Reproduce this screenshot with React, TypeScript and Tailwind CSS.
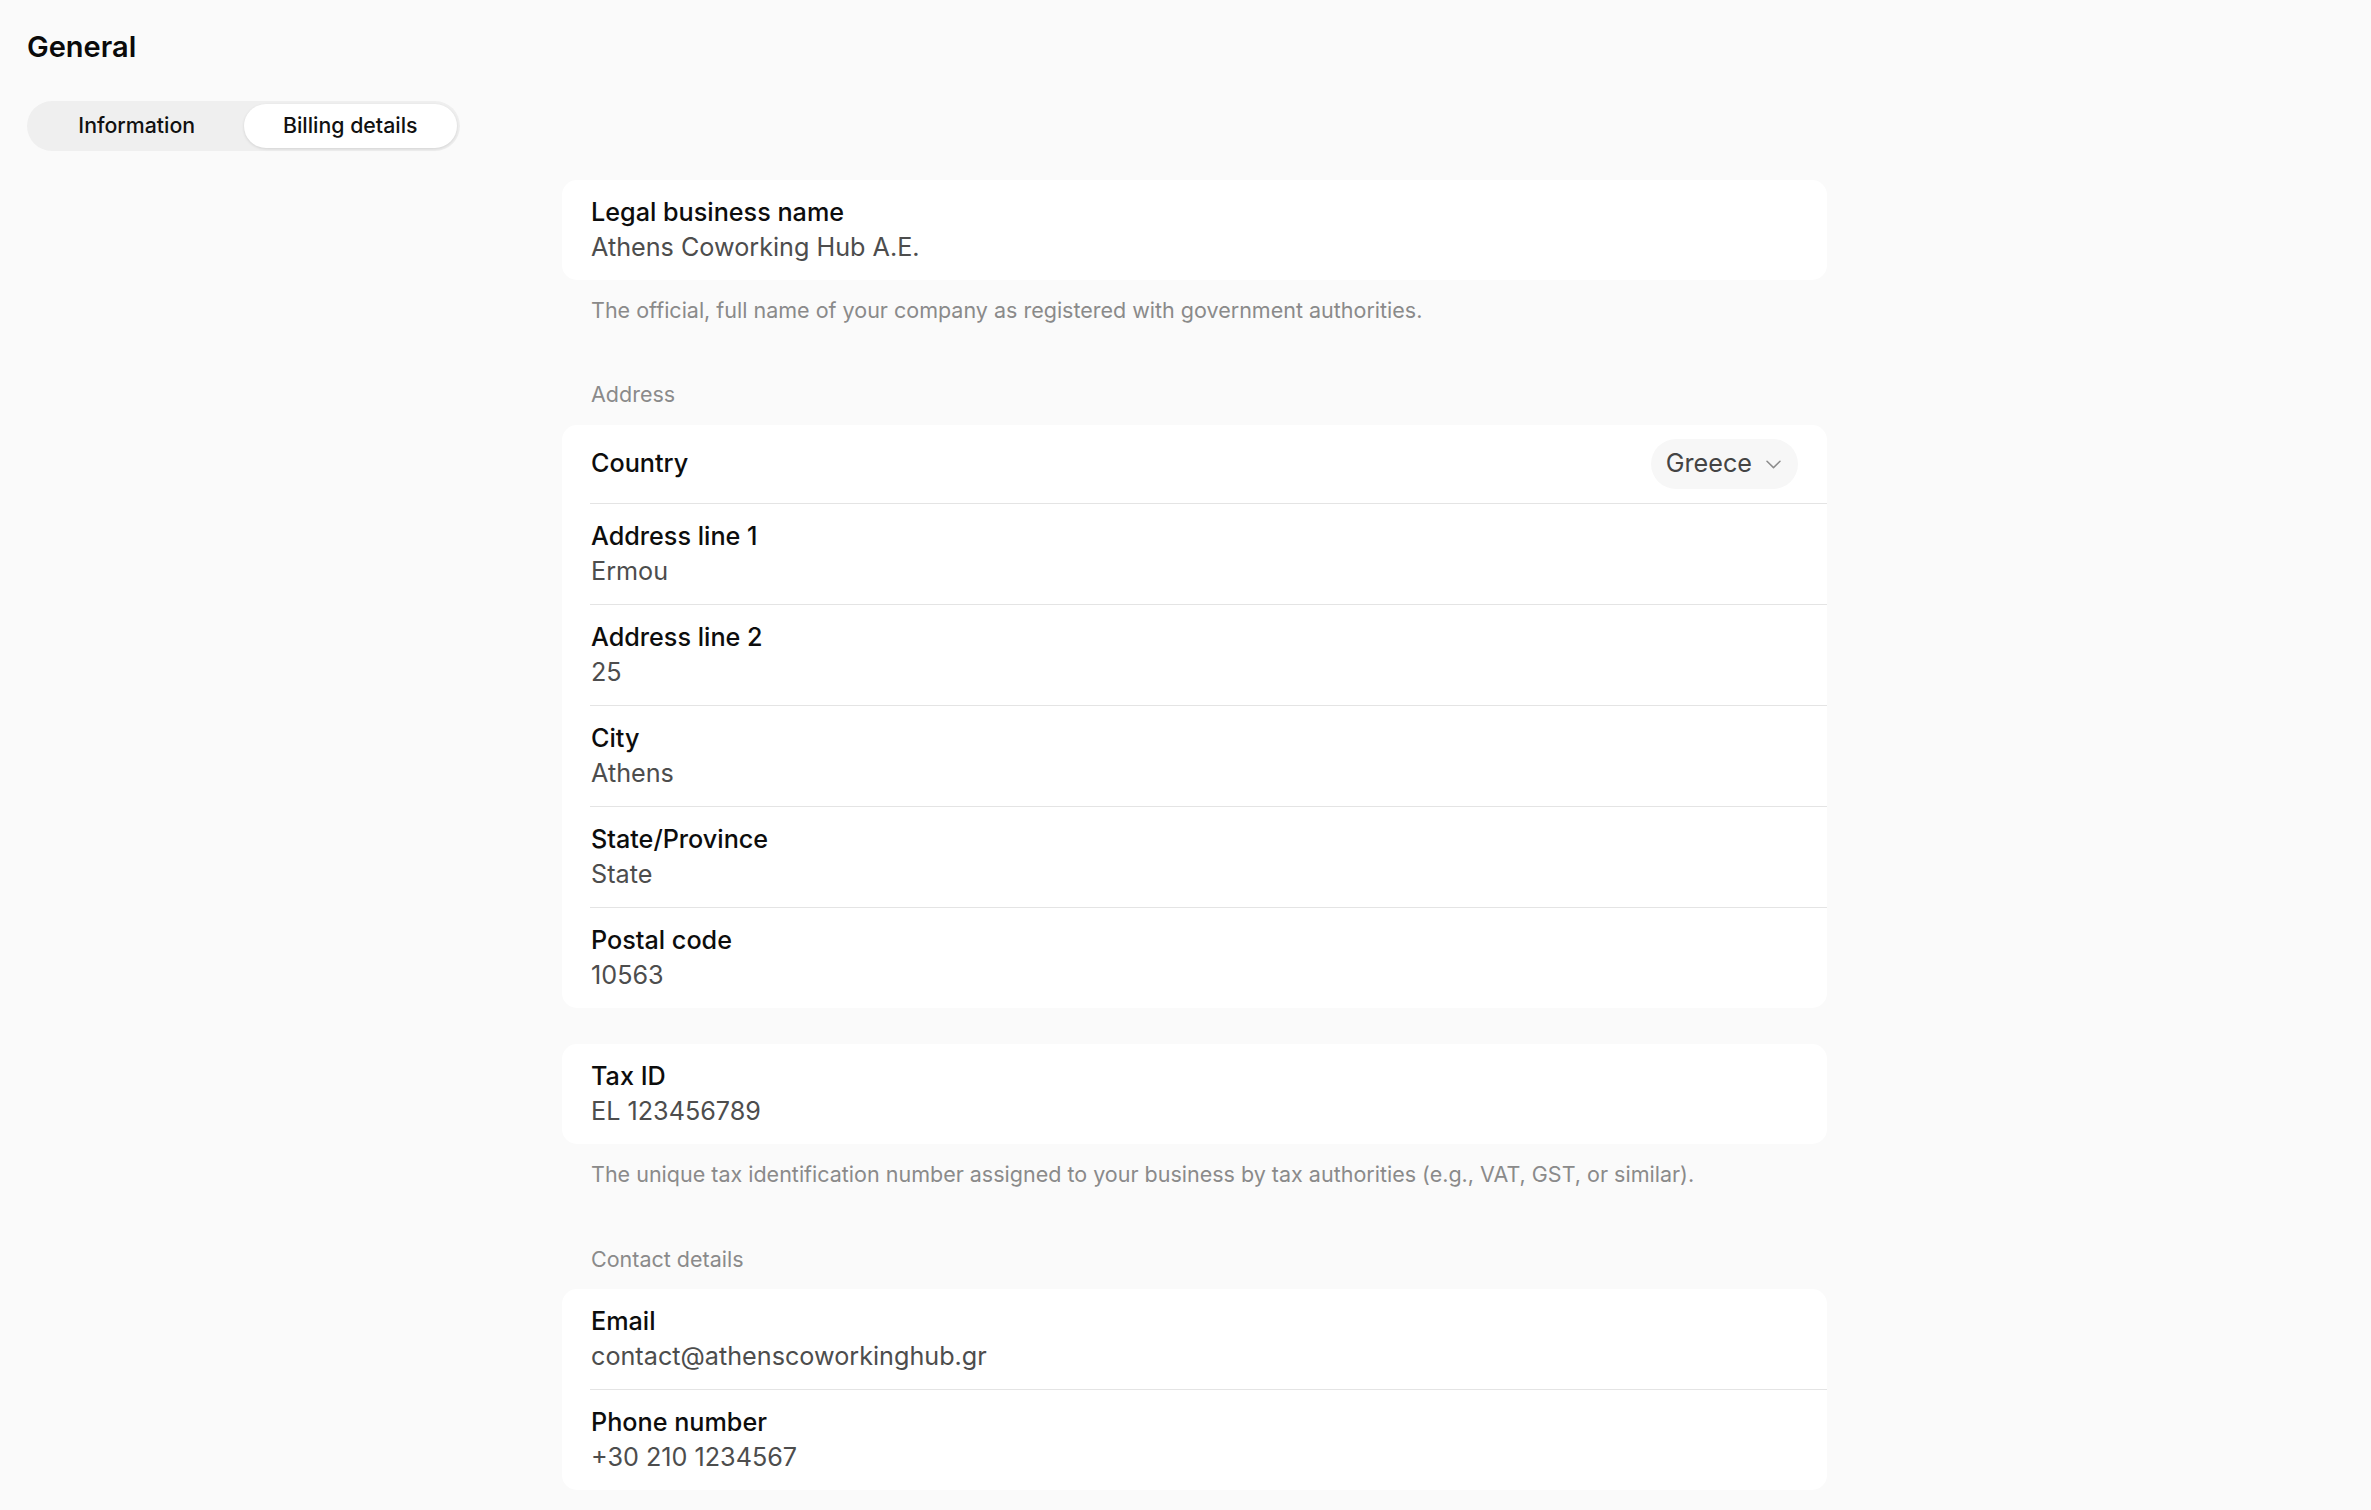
import React from "react";

function Divider() {
  return <div className="ml-[28px] h-px bg-[#e4e4e4]" />;
}

function Field({ label, value }: { label: string; value: string }) {
  return (
    <div className="pl-[29px] pr-[29px] py-[15px]">
      <div className="text-[25.2px] leading-[35px] font-medium text-[#0d0d0d]">{label}</div>
      <div className="text-[25.2px] leading-[35px] text-[#4d4d4d]">{value}</div>
    </div>
  );
}

function Card({ children }: { children: React.ReactNode }) {
  return <div className="rounded-[15px] bg-white">{children}</div>;
}

function Help({ children, className = "" }: { children: React.ReactNode; className?: string }) {
  return (
    <div className={"pl-[29px] text-[21.5px] leading-[29px] text-[#8a8a8a] " + className}>{children}</div>
  );
}

export default function App() {
  return (
    <div className="min-h-screen bg-[#fafafa] px-[27px] pt-[26px] pb-[40px] font-['Inter',_sans-serif]">
      <h1 className="text-[29px] leading-[42px] font-semibold text-[#0a0a0a]">General</h1>

      <div className="mt-[33px] grid h-[50px] w-[433px] grid-cols-2 rounded-full bg-[#efefef] p-[3px]">
        <div className="flex items-center justify-center rounded-full text-[21.3px] font-medium text-[#111]">
          Information
        </div>
        <div className="flex items-center justify-center rounded-full bg-white text-[21.3px] font-medium text-[#111] shadow-[0_1px_3px_rgba(0,0,0,0.12)]">
          Billing details
        </div>
      </div>

      <div className="ml-[535px] mt-[29px] w-[1265px]">
        <Card>
          <Field label="Legal business name" value="Athens Coworking Hub A.E." />
        </Card>
        <Help className="mt-[16px]">
          The official, full name of your company as registered with government authorities.
        </Help>

        <Help className="mt-[55px]">Address</Help>
        <div className="mt-[16px]">
          <Card>
            <div className="flex h-[78px] items-center justify-between pl-[29px] pr-[29px]">
              <div className="text-[25.2px] font-medium text-[#0d0d0d]">Country</div>
              <div className="flex h-[50px] items-center gap-[14px] rounded-full bg-[#f7f7f7] pl-[15px] pr-[17px]">
                <span className="text-[25.2px] text-[#444]">Greece</span>
                <svg width="15" height="9" viewBox="0 0 15 9" fill="none">
                  <path d="M1 1.2L7.5 7.6L14 1.2" stroke="#8c8c8c" strokeWidth="1.5" strokeLinecap="round" strokeLinejoin="round" />
                </svg>
              </div>
            </div>
            <Divider />
            <Field label="Address line 1" value="Ermou" />
            <Divider />
            <Field label="Address line 2" value="25" />
            <Divider />
            <Field label="City" value="Athens" />
            <Divider />
            <Field label="State/Province" value="State" />
            <Divider />
            <Field label="Postal code" value="10563" />
          </Card>
        </div>

        <div className="mt-[36px]">
          <Card>
            <Field label="Tax ID" value="EL 123456789" />
          </Card>
        </div>
        <Help className="mt-[16px]">
          The unique tax identification number assigned to your business by tax authorities (e.g., VAT, GST, or similar).
        </Help>

        <Help className="mt-[56px]">Contact details</Help>
        <div className="mt-[15px]">
          <Card>
            <Field label="Email" value="contact@athenscoworkinghub.gr" />
            <Divider />
            <Field label="Phone number" value="+30 210 1234567" />
          </Card>
        </div>
      </div>
    </div>
  );
}
